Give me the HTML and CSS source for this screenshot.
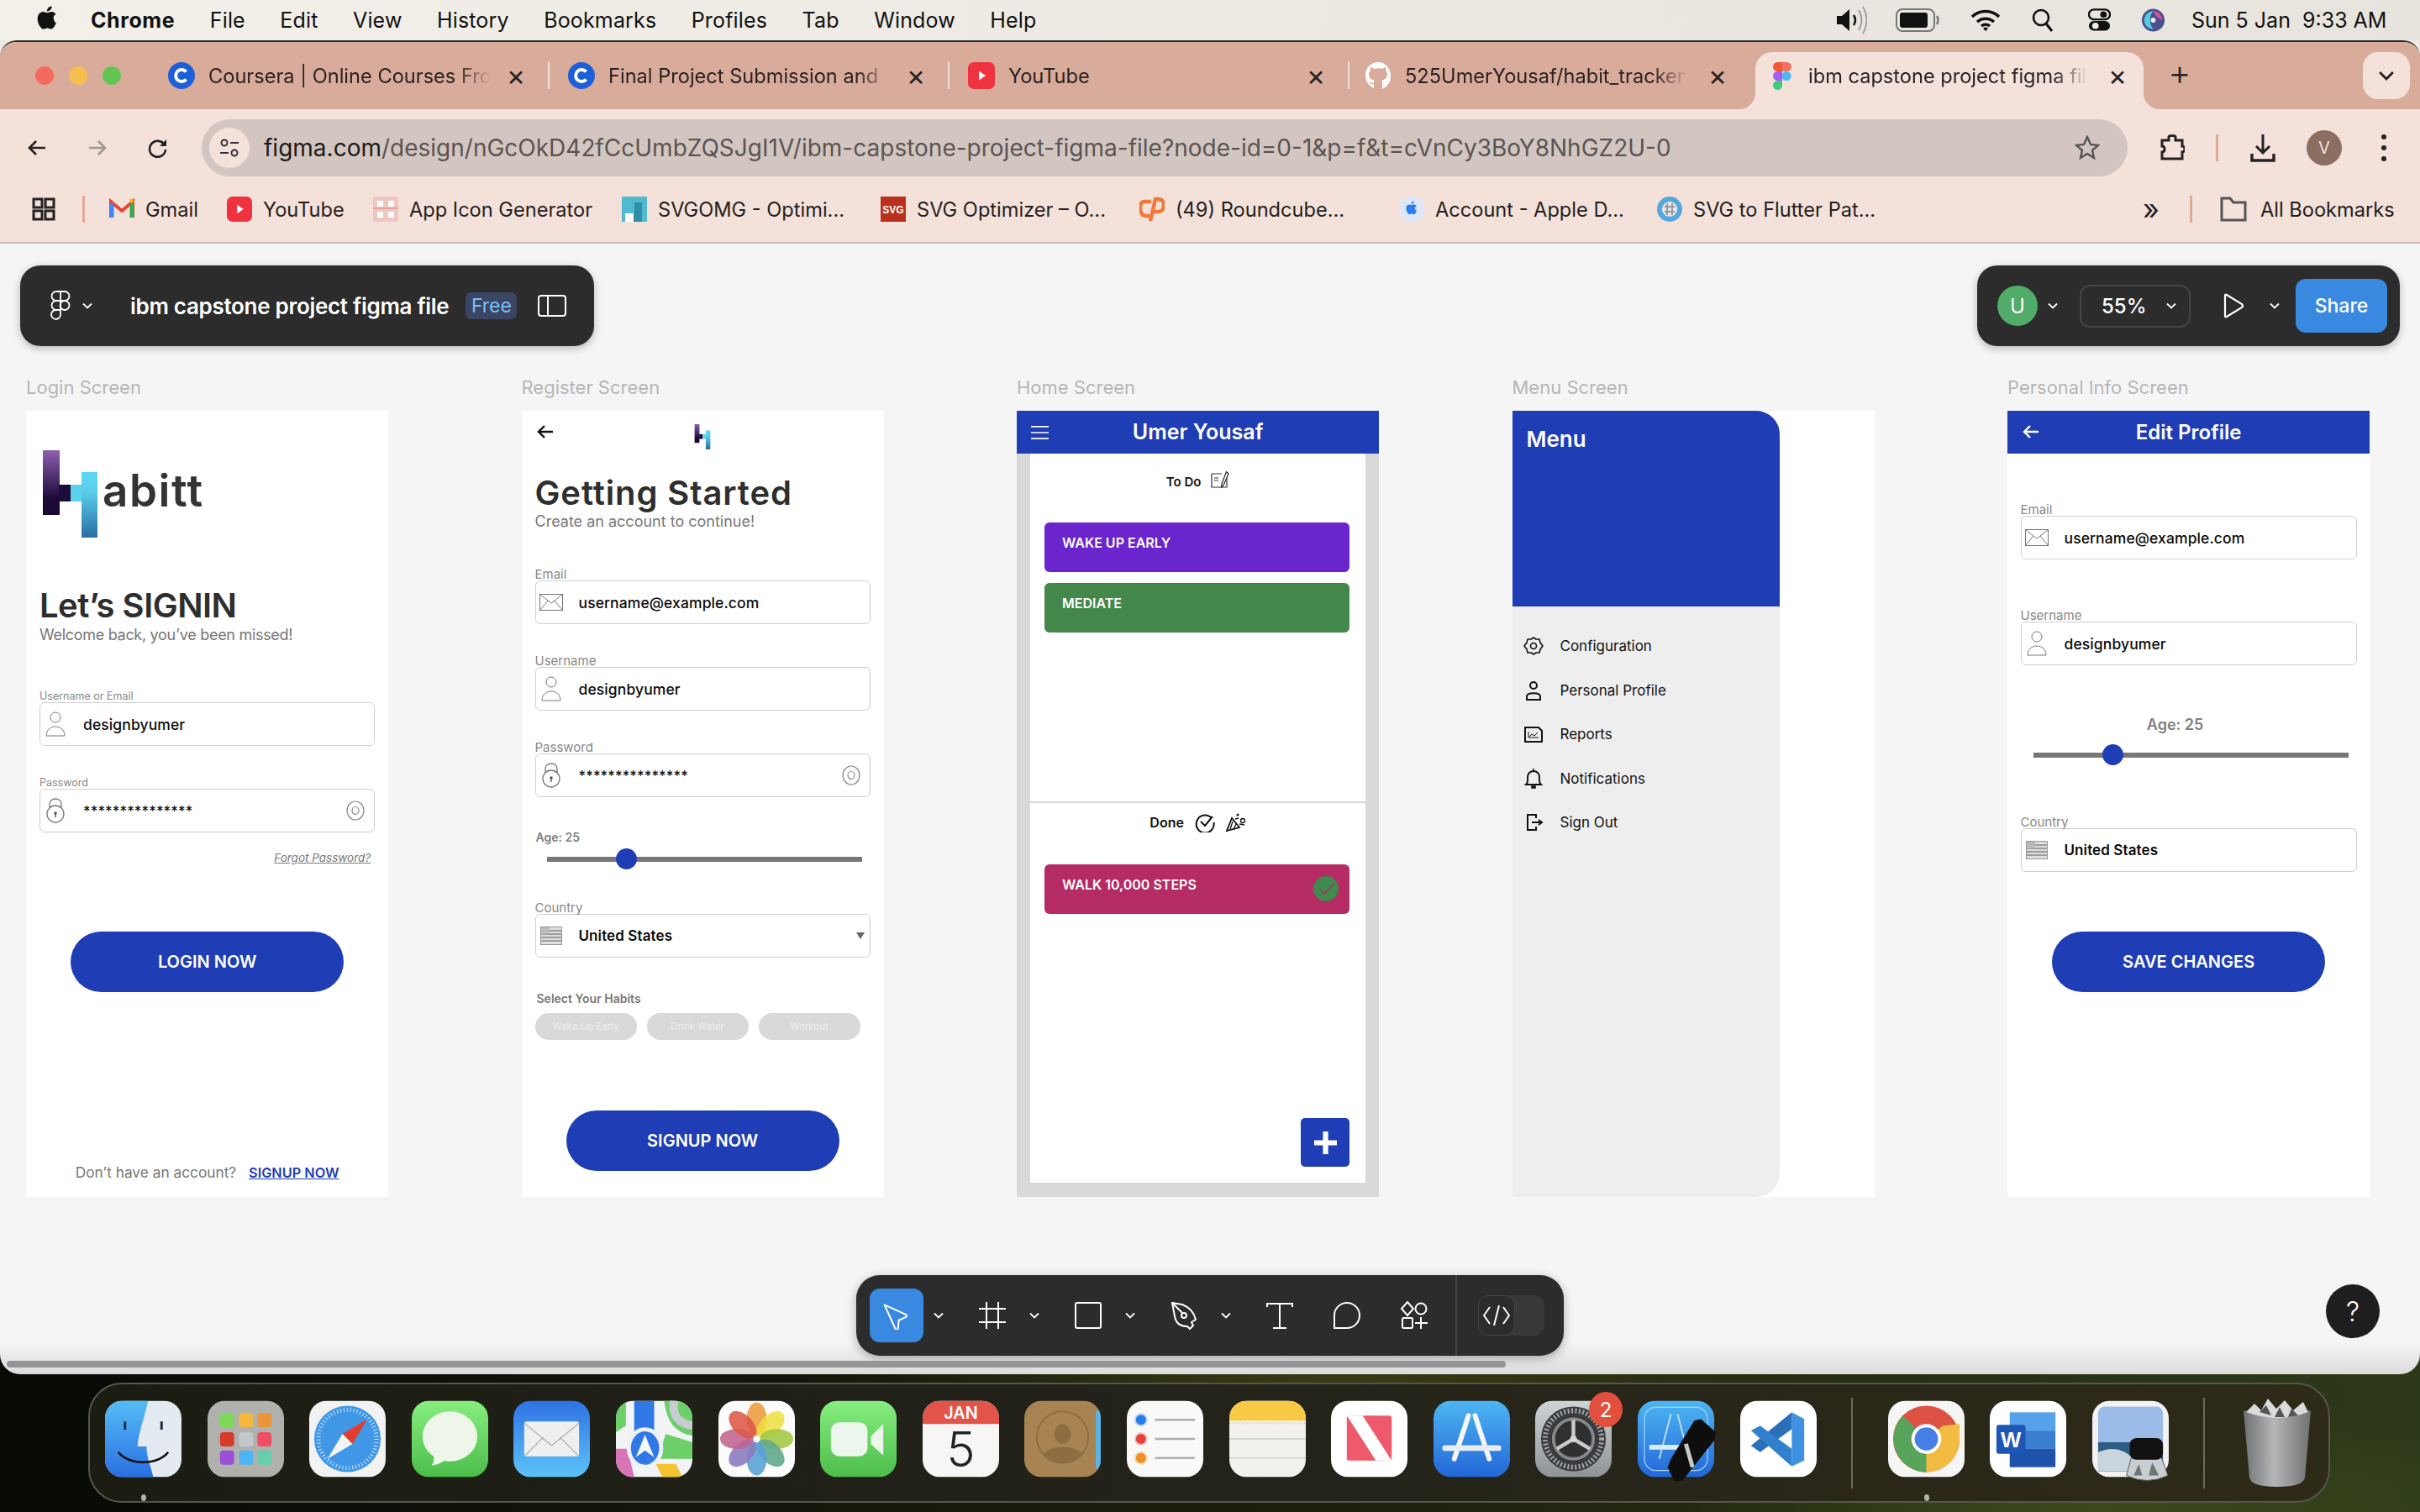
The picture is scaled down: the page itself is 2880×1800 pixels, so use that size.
FILE: index.html
```html
<!DOCTYPE html>
<html lang="en">
<head>
<meta charset="utf-8">
<title>ibm capstone project figma file</title>
<link rel="stylesheet" href="styles.css">
</head>
<body>
<svg class="defs" width="0" height="0" aria-hidden="true">
  <defs>
    <linearGradient id="g-purple" x1="0" y1="0" x2="0" y2="1"><stop offset="0" stop-color="#8d5fb0"/><stop offset=".75" stop-color="#1c0a38"/><stop offset="1" stop-color="#180833"/></linearGradient>
    <linearGradient id="g-teal" x1="0" y1="0" x2="0" y2="1"><stop offset="0" stop-color="#5ed8f2"/><stop offset=".3" stop-color="#59cfea"/><stop offset="1" stop-color="#2b6ca4"/></linearGradient>
    <linearGradient id="g-msg" x1="0" y1="0" x2="0" y2="1"><stop offset="0" stop-color="#87ee7f"/><stop offset="1" stop-color="#4cbd4a"/></linearGradient>
    <linearGradient id="g-mail" x1="0" y1="0" x2="0" y2="1"><stop offset="0" stop-color="#2f72e3"/><stop offset="1" stop-color="#5cc3f9"/></linearGradient>
    <linearGradient id="g-store" x1="0" y1="0" x2="0" y2="1"><stop offset="0" stop-color="#4db6f2"/><stop offset="1" stop-color="#2367d8"/></linearGradient>
    <linearGradient id="g-gear" x1="0" y1="0" x2="0" y2="1"><stop offset="0" stop-color="#cfd4d6"/><stop offset="1" stop-color="#8f9396"/></linearGradient>
    <linearGradient id="g-trash" x1="0" y1="0" x2="1" y2="0"><stop offset="0" stop-color="#6f7072"/><stop offset=".45" stop-color="#b5b6b8"/><stop offset="1" stop-color="#707173"/></linearGradient>
    <linearGradient id="g-finder" x1="0" y1="0" x2="0" y2="1"><stop offset="0" stop-color="#55bdf6"/><stop offset="1" stop-color="#2a6fe2"/></linearGradient>
    <clipPath id="sq"><rect width="92" height="92" rx="21"/></clipPath>

    <symbol id="logo-h" viewBox="0 0 65 104">
      <rect x="0" y="0" width="20" height="77" fill="url(#g-purple)"/>
      <rect x="19" y="41" width="14" height="20" fill="#1d0b3a"/>
      <rect x="33" y="41" width="14" height="20" fill="#5ad2ec"/>
      <rect x="46" y="26" width="19" height="78" fill="url(#g-teal)"/>
    </symbol>
    <symbol id="i-env" viewBox="0 0 28 20">
      <rect x=".5" y=".5" width="27" height="19" fill="none" stroke="#777"/>
      <path d="M.5 .5 14 11 27.500 .5M.5 19.500 10 8M27.500 19.500 18 8" fill="none" stroke="#777"/>
    </symbol>
    <symbol id="i-user" viewBox="0 0 24 30">
      <circle cx="12" cy="7" r="6" fill="none" stroke="#777"/>
      <path d="M1 29C1 22 6 18 12 18S23 22 23 29Z" fill="none" stroke="#777"/>
    </symbol>
    <symbol id="i-lock" viewBox="0 0 22 34">
      <path d="M4 14V9C4 1 18 1 18 9V14" fill="none" stroke="#777" stroke-width="1.300"/>
      <circle cx="11" cy="21" r="10" fill="none" stroke="#777" stroke-width="1.300"/>
      <circle cx="11" cy="20" r="1.800" fill="#555"/><rect x="10.300" y="20" width="1.400" height="5" fill="#555"/>
    </symbol>
    <symbol id="i-eye" viewBox="0 0 22 24">
      <ellipse cx="11" cy="12" rx="10" ry="11" fill="none" stroke="#888" stroke-width="1.200"/>
      <ellipse cx="11" cy="12" rx="4" ry="4.500" fill="none" stroke="#888" stroke-width="1.200"/>
    </symbol>
    <symbol id="i-flag" viewBox="0 0 26 22">
      <rect x=".5" y=".5" width="25" height="21" fill="#ddd" stroke="#999"/>
      <path d="M1 5H25M1 9H25M1 13H25M1 17H25" stroke="#888" stroke-width="1.500"/>
      <rect x="1" y="1" width="10" height="8" fill="#bbb"/>
    </symbol>
    <symbol id="i-back" viewBox="0 0 20 18">
      <path d="M19 9H3M9 2 2 9l7 7" fill="none" stroke="currentColor" stroke-width="2.400"/>
    </symbol>
    <symbol id="chev" viewBox="0 0 14 10">
      <path d="M2 2.500 7 7.500 12 2.500" fill="none" stroke="currentColor" stroke-width="1.800"/>
    </symbol>
    <symbol id="fav-c" viewBox="0 0 32 32">
      <circle cx="16" cy="16" r="16" fill="#1c5fd6"/>
      <path d="M21.500 11.500A7 7 0 1 0 21.500 20.500" fill="none" stroke="#fff" stroke-width="4"/>
    </symbol>
    <symbol id="fav-yt" viewBox="0 0 32 32">
      <rect width="32" height="32" rx="7" fill="#ee3240"/><path d="M13 10.500 21 16 13 21.500Z" fill="#fff"/>
    </symbol>
  </defs>
</svg>

<div class="menubar">
  <svg class="apple" viewBox="0 0 26 30"><path d="M21.500 16c0-3.500 2.800-5 3-5.200-1.700-2.400-4.200-2.800-5.100-2.800-2.100-.2-4.200 1.300-5.300 1.300S11.200 8 9.400 8C7.100 8.100 5 9.400 3.800 11.400c-2.400 4.200-.6 10.400 1.700 13.800C6.700 26.900 8 28.800 9.800 28.700c1.700-.1 2.400-1.100 4.400-1.100s2.700 1.100 4.500 1c1.900 0 3-1.700 4.200-3.400 1.300-1.900 1.900-3.800 1.900-3.900-.1 0-2.800-1.100-2.800-5.300ZM18.200 5.600C19.100 4.400 19.800 2.800 19.600 1.200 18.200 1.300 16.500 2.100 15.500 3.300c-.9 1-1.700 2.600-1.500 4.200 1.600.1 3.200-.8 4.200-1.900Z" fill="#111"/></svg>
  <nav class="menu-items">
    <span class="menu-app">Chrome</span><span>File</span><span>Edit</span><span>View</span><span>History</span><span>Bookmarks</span><span>Profiles</span><span>Tab</span><span>Window</span><span>Help</span>
  </nav>
  <div class="status">
    <svg class="st st-vol" viewBox="0 0 38 36"><path d="M2 13H8L17 5V31L8 23H2Z" fill="#111"/><path d="M22 12Q26 18 22 24" fill="none" stroke="#111" stroke-width="2.500"/><path d="M28 6Q35 18 28 30M33 2Q42 18 33 34" fill="none" stroke="#999" stroke-width="1.800"/></svg>
    <svg class="st st-bat" viewBox="0 0 52 30"><rect x="1" y="2" width="45" height="26" rx="7" fill="none" stroke="#777" stroke-width="2"/><rect x="5" y="6" width="33" height="18" rx="3" fill="#111"/><path d="M49 10Q52 15 49 20" fill="none" stroke="#777" stroke-width="2.500"/></svg>
    <svg class="st st-wifi" viewBox="0 0 36 28"><path d="M2 10A23 23 0 0 1 34 10M8 16A15 15 0 0 1 28 16M13 21A8 8 0 0 1 23 21" fill="none" stroke="#111" stroke-width="3.500"/><path d="M15 24 18 27 21 24 18 22Z" fill="#111"/></svg>
    <svg class="st st-search" viewBox="0 0 26 30"><circle cx="11" cy="12" r="9" fill="none" stroke="#111" stroke-width="2.600"/><path d="M17 19 24 28" stroke="#111" stroke-width="3"/></svg>
    <svg class="st st-ctl" viewBox="0 0 28 28"><rect x="1" y="1" width="26" height="12" rx="6" fill="none" stroke="#111" stroke-width="2.400"/><circle cx="19" cy="7" r="4" fill="#111"/><rect x="1" y="15" width="26" height="12" rx="6" fill="#111"/><circle cx="9" cy="21" r="4" fill="#ececec"/></svg>
    <svg class="st st-siri" viewBox="0 0 30 30"><circle cx="15" cy="15" r="14" fill="#4b4f8f"/><path d="M4 15A11 11 0 0 1 15 4C10 9 10 20 15 26A11 11 0 0 1 4 15Z" fill="#4ccfe0"/><path d="M15 4A11 11 0 0 1 26 15C20 12 17 9 15 4Z" fill="#d94f9c"/><circle cx="15" cy="15" r="3" fill="#eef"/></svg>
    <span class="clock">Sun 5 Jan&nbsp;&nbsp;9:33 AM</span>
  </div>
</div>

<div class="window">
  <div class="tabstrip">
    <div class="lights"><i class="light l-r"></i><i class="light l-y"></i><i class="light l-g"></i></div>
    <div class="tab"><svg class="fav"><use href="#fav-c"/></svg><span class="tab-t">Coursera | Online Courses Fro</span><span class="tab-x">×</span></div>
    <div class="tab"><svg class="fav"><use href="#fav-c"/></svg><span class="tab-t">Final Project Submission and</span><span class="tab-x">×</span></div>
    <div class="tab"><svg class="fav"><use href="#fav-yt"/></svg><span class="tab-t tab-t-plain">YouTube</span><span class="tab-x">×</span></div>
    <div class="tab tab-gh"><svg class="fav" viewBox="0 0 32 32"><path d="M16 0C7 0 1 7 1 16c0 7 4 12 10 15v-5c-4 1-5-1-6-3 2 1 3 2 6 2 0-2 0-3 1-3-4-1-7-3-7-8 0-2 1-3 2-4-1-2 0-4 0-4s2 0 4 2c3-1 7-1 10 0 2-2 4-2 4-2s1 2 0 4c1 1 2 2 2 4 0 5-3 7-7 8 1 1 1 2 1 4v6c6-3 10-8 10-15C31 7 25 0 16 0Z" fill="#fff"/></svg><span class="tab-t">525UmerYousaf/habit_tracker</span><span class="tab-x">×</span></div>
    <div class="tab tab-on"><svg class="fav fav-fig" viewBox="0 0 22 33"><circle cx="16" cy="16.500" r="5.500" fill="#4db8f5"/><path d="M5.500 0H11V11H5.500A5.500 5.500 0 0 1 5.500 0Z" fill="#f2583a"/><path d="M11 0H16.500A5.500 5.500 0 0 1 16.500 11H11Z" fill="#f27262"/><path d="M5.500 11H11V22H5.500A5.500 5.500 0 0 1 5.500 11Z" fill="#a45df0"/><path d="M5.500 22H11V27.500A5.500 5.500 0 1 1 5.500 22Z" fill="#3ecb7f"/></svg><span class="tab-t">ibm capstone project figma fil</span><span class="tab-x">×</span></div>
    <span class="tab-plus">+</span>
    <span class="tab-more"><svg class="chev-more"><use href="#chev"/></svg></span>
  </div>

  <div class="toolbar">
    <svg class="nav-i" viewBox="0 0 24 24"><path d="M22 12H4M11 4 3 12l8 8" fill="none" stroke="#222" stroke-width="2.600"/></svg>
    <svg class="nav-i" viewBox="0 0 24 24"><path d="M2 12H20M13 4l8 8-8 8" fill="none" stroke="#a09793" stroke-width="2.600"/></svg>
    <svg class="nav-i" viewBox="0 0 24 24"><path d="M20 9A9.500 9.500 0 1 0 21 14" fill="none" stroke="#222" stroke-width="2.600"/><path d="M22 2V10H14Z" fill="#222"/></svg>
    <div class="omnibox">
      <span class="site-btn"><svg viewBox="0 0 26 26"><circle cx="7" cy="7" r="3.500" fill="none" stroke="#333" stroke-width="2"/><path d="M14 7H24M2 19H12" stroke="#333" stroke-width="2"/><circle cx="19" cy="19" r="3.500" fill="none" stroke="#333" stroke-width="2"/></svg></span>
      <span class="url"><b>figma.com</b>/design/nGcOkD42fCcUmbZQSJgI1V/ibm-capstone-project-figma-file?node-id=0-1&amp;p=f&amp;t=cVnCy3BoY8NhGZ2U-0</span>
      <svg class="star" viewBox="0 0 30 30"><path d="M15 2 19 11 28 12 21 18 23 27 15 22 7 27 9 18 2 12 11 11Z" fill="none" stroke="#555" stroke-width="2.400"/></svg>
    </div>
    <svg class="tb-ext" viewBox="0 0 30 32"><path d="M3 7H11V3C11 1 19 1 19 3V7H27V14C29 14 30 16 30 17.500 30 19 29 21 27 21V29H3V21C7 21 7 14 3 14Z" fill="none" stroke="#222" stroke-width="3"/></svg>
    <i class="tb-sep"></i>
    <svg class="tb-dl" viewBox="0 0 30 34"><path d="M15 1V22M7 15 15 23 23 15" fill="none" stroke="#222" stroke-width="3"/><path d="M2 24V32H28V24" fill="none" stroke="#222" stroke-width="3.400"/></svg>
    <span class="tb-avatar">V</span>
    <span class="tb-dots"><i></i><i></i><i></i></span>
  </div>

  <div class="bookmarks">
    <div class="bm-start"><svg class="bm-apps" viewBox="0 0 28 28"><path d="M2 2H12V12H2ZM16 2H26V12H16ZM2 16H12V26H2ZM16 16H26V26H16Z" fill="none" stroke="#222" stroke-width="3"/></svg><i class="bm-sep"></i></div>
    <div class="bm-list">
      <span class="bm"><svg class="bmi" viewBox="0 0 30 30"><path d="M2 25V6L15 17 28 6V25" fill="none" stroke="#ea4335" stroke-width="4"/><path d="M3 25V8" stroke="#4285f4" stroke-width="5"/><path d="M27 25V8" stroke="#34a853" stroke-width="5"/><path d="M25 6 28 4" stroke="#fbbc04" stroke-width="5"/></svg>Gmail</span>
      <span class="bm"><svg class="bmi"><use href="#fav-yt"/></svg>YouTube</span>
      <span class="bm"><svg class="bmi" viewBox="0 0 30 30"><path d="M0 0H30V30H0Z" fill="#eec7c0"/><path d="M5 5H12V12H5ZM18 5H25V12H18ZM5 18H12V25H5ZM18 18H25V25H18Z" fill="#fff"/><path d="M0 14H30" stroke="#e5a59c" stroke-width="2"/></svg>App Icon Generator</span>
      <span class="bm"><svg class="bmi" viewBox="0 0 30 30"><rect width="30" height="30" fill="#52b9d2"/><path d="M15 7H24V30H4V20H15Z" fill="#2f8ea6"/><rect x="4" y="20" width="10" height="10" fill="#fff"/></svg>SVGOMG - Optimi...</span>
      <span class="bm"><svg class="bmi" viewBox="0 0 30 30"><rect width="30" height="30" fill="#b9301d"/><text x="15" y="20" text-anchor="middle" class="svg-mini">SVG</text></svg>SVG Optimizer – O...</span>
      <span class="bm"><svg class="bmi" viewBox="0 0 30 30"><path d="M14 6H6C2 6 1 10 1 14S3 23 8 23H12" fill="none" stroke="#f0793a" stroke-width="4.500"/><path d="M13 29 19 3H23C28 3 29 8 29 11S27 18 22 18H17" fill="none" stroke="#f0793a" stroke-width="4.500"/></svg>(49) Roundcube...</span>
      <span class="bm bm-apple"><svg class="bmi" viewBox="0 0 30 30"><circle cx="15" cy="15" r="15" fill="#dbe8fb"/><path d="M19 14c0-2 1.500-3 1.700-3-1-1.400-2.400-1.600-2.900-1.600-1.200-.1-2.400.7-3 .7S13.200 9.400 12.200 9.400C10.800 9.400 9.600 10.200 9 11.300 7.600 13.700 8.600 17.200 10 19.200c.7 1 1.400 2.100 2.500 2 1-.1 1.300-.6 2.500-.6s1.500.6 2.500.6c1.100 0 1.700-1 2.400-2 .7-1.100 1-2.100 1-2.200-.1 0-1.900-.7-1.900-3ZM17 7.800C17.500 7.100 17.900 6.200 17.800 5.300 17 5.400 16 5.800 15.500 6.500 15 7.100 14.500 8 14.600 8.900 15.500 9 16.400 8.500 17 7.800Z" fill="#2b7cf0"/></svg>Account - Apple D...</span>
      <span class="bm"><svg class="bmi" viewBox="0 0 30 30"><circle cx="15" cy="15" r="15" fill="#55a8de"/><circle cx="15" cy="15" r="9" fill="#e8e8e8"/><path d="M9 12H21M9 18H21M12 8V22M18 8V22" stroke="#999" stroke-width="2"/></svg>SVG to Flutter Pat...</span>
    </div>
    <div class="bm-end">
      <span class="bm-more">»</span><i class="bm-sep"></i>
      <svg class="bm-folder" viewBox="0 0 32 30"><path d="M2 28V2H12L16 7H30V28Z" fill="none" stroke="#555" stroke-width="3"/></svg>
      <span class="bm-all">All Bookmarks</span>
    </div>
  </div>

  <main class="canvas">
    <div class="screens">

      <section class="artboard">
        <h2 class="board-name">Login Screen</h2>
        <div class="frame login">
          <div class="brand"><svg class="brand-h"><use href="#logo-h"/></svg><span class="brand-t">abitt</span></div>
          <h1 class="headline login-title">Let’s SIGNIN</h1>
          <p class="subline login-sub">Welcome back, you’ve been missed!</p>
          <div class="field login-f1"><div class="f-label f-label-sm">Username or Email</div><div class="input"><span class="slot"><svg class="ic-user"><use href="#i-user"/></svg></span><span class="val">designbyumer</span></div></div>
          <div class="field login-f2"><div class="f-label f-label-sm">Password</div><div class="input"><span class="slot"><svg class="ic-lock"><use href="#i-lock"/></svg></span><span class="val val-pw">***************</span><svg class="ic-eye"><use href="#i-eye"/></svg></div></div>
          <a class="forgot">Forgot Password?</a>
          <div class="cta login-cta">LOGIN NOW</div>
          <p class="foot">Don’t have an account? <a class="foot-link">SIGNUP NOW</a></p>
        </div>
      </section>

      <section class="artboard">
        <h2 class="board-name">Register Screen</h2>
        <div class="frame register">
          <div class="reg-top"><svg class="reg-back"><use href="#i-back"/></svg><svg class="reg-logo"><use href="#logo-h"/></svg></div>
          <h1 class="headline reg-title">Getting Started</h1>
          <p class="subline reg-sub">Create an account to continue!</p>
          <div class="field reg-f1"><div class="f-label">Email</div><div class="input"><span class="slot"><svg class="ic-env"><use href="#i-env"/></svg></span><span class="val">username@example.com</span></div></div>
          <div class="field reg-f"><div class="f-label">Username</div><div class="input"><span class="slot"><svg class="ic-user"><use href="#i-user"/></svg></span><span class="val">designbyumer</span></div></div>
          <div class="field reg-f"><div class="f-label">Password</div><div class="input"><span class="slot"><svg class="ic-lock"><use href="#i-lock"/></svg></span><span class="val val-pw">***************</span><svg class="ic-eye"><use href="#i-eye"/></svg></div></div>
          <div class="age reg-age">Age: 25</div>
          <div class="slider reg-slider"><i class="thumb"></i></div>
          <div class="field reg-f reg-country"><div class="f-label">Country</div><div class="input"><span class="slot"><svg class="ic-flag"><use href="#i-flag"/></svg></span><span class="val val-strong">United States</span><i class="caret"></i></div></div>
          <div class="habits-title">Select Your Habits</div>
          <div class="chips"><span class="chip">Wake Up Early</span><span class="chip">Drink Water</span><span class="chip">Workout</span></div>
          <div class="cta reg-cta">SIGNUP NOW</div>
        </div>
      </section>

      <section class="artboard">
        <h2 class="board-name">Home Screen</h2>
        <div class="frame home">
          <header class="bar">
            <svg class="burger" viewBox="0 0 22 18"><path d="M0 1.500H22M0 9H22M0 16.500H22" stroke="#fff" stroke-width="1.800"/></svg>
            <span class="bar-title">Umer Yousaf</span>
          </header>
          <div class="home-body">
            <div class="home-todo">
              <div class="sec-head">To Do<svg class="ic-note" viewBox="0 0 22 22"><path d="M13 4H1V20H19V9" fill="none" stroke="#333" stroke-width="1.200"/><path d="M4 9H9M4 12H9" stroke="#333" stroke-width="1.200"/><path d="M13 16 12.500 20 15 18 21 4 18.500 1.500Z" fill="#fff" stroke="#222" stroke-width="1.200"/></svg></div>
              <div class="habit h-purple">WAKE UP EARLY</div>
              <div class="habit h-green">MEDIATE</div>
            </div>
            <div class="home-done">
              <div class="sec-head sec-done">Done<svg class="ic-check" viewBox="0 0 24 24"><path d="M20 7A10.500 10.500 0 1 0 22.500 12" fill="none" stroke="#111" stroke-width="2"/><path d="M7 11 12 16 21 5" fill="none" stroke="#111" stroke-width="2"/></svg><svg class="ic-party" viewBox="0 0 24 24"><path d="M1 22 7 7 16 18Z" fill="none" stroke="#111" stroke-width="1.800"/><path d="M5 20 8 11M9 20 12 14" stroke="#111" stroke-width="1.300"/><circle cx="14" cy="3" r="1.500" fill="#111"/><circle cx="20" cy="10" r="2.500" fill="none" stroke="#111" stroke-width="1.300"/><path d="M11 8 15 7M16 14 22 15" stroke="#111" stroke-width="1.500"/></svg></div>
              <div class="habit h-pink">WALK 10,000 STEPS<svg class="done-mark" viewBox="0 0 30 30"><circle cx="15" cy="15" r="15" fill="#3f8a4d"/><path d="M7 15 13 21 25 8" fill="none" stroke="#b52b63" stroke-width="1.400"/></svg></div>
              <div class="fab"><svg viewBox="0 0 26 26"><path d="M13 0V26M0 13H26" stroke="#fff" stroke-width="6"/></svg></div>
            </div>
          </div>
        </div>
      </section>

      <section class="artboard">
        <h2 class="board-name">Menu Screen</h2>
        <div class="frame menu">
          <aside class="drawer">
            <div class="drawer-head">Menu</div>
            <ul class="drawer-list">
              <li><svg class="d-ic" viewBox="0 0 24 24"><path d="M12 2 15 4 19 4 20 8 23 12 20 16 19 20 15 20 12 22 9 20 5 20 4 16 1 12 4 8 5 4 9 4Z" fill="none" stroke="#111" stroke-width="1.600" stroke-linejoin="round"/><circle cx="12" cy="12" r="3.500" fill="none" stroke="#111" stroke-width="1.600"/></svg>Configuration</li>
              <li><svg class="d-ic" viewBox="0 0 24 24"><circle cx="12" cy="6" r="4" fill="none" stroke="#111" stroke-width="2"/><path d="M4 23V19C4 14 20 14 20 19V23Z" fill="none" stroke="#111" stroke-width="2"/></svg>Personal Profile</li>
              <li><svg class="d-ic" viewBox="0 0 24 24"><path d="M2 4H18L22 8V21H2Z" fill="none" stroke="#111" stroke-width="2"/><path d="M6 9V16H18M7 15 10 12 13 14 17 10" fill="none" stroke="#111" stroke-width="1"/></svg>Reports</li>
              <li><svg class="d-ic" viewBox="0 0 24 24"><path d="M3 19H21C18 16 19 14 19 10S16 3 12 3 5 6 5 10 6 16 3 19Z" fill="none" stroke="#111" stroke-width="1.900"/><path d="M12 0V3M10 21H14V23H10Z" stroke="#111" stroke-width="1.600" fill="#111"/></svg>Notifications</li>
              <li><svg class="d-ic" viewBox="0 0 24 24"><path d="M15 7V3H5V21H15V17" fill="none" stroke="#111" stroke-width="2"/><path d="M10 12H21M18 9 22 12 18 15" fill="none" stroke="#111" stroke-width="2"/></svg>Sign Out</li>
            </ul>
          </aside>
        </div>
      </section>

      <section class="artboard">
        <h2 class="board-name">Personal Info Screen</h2>
        <div class="frame profile">
          <header class="bar">
            <svg class="bar-back"><use href="#i-back"/></svg>
            <span class="bar-title bar-title-sm">Edit Profile</span>
          </header>
          <div class="profile-body">
            <div class="field pf-f1"><div class="f-label">Email</div><div class="input"><span class="slot"><svg class="ic-env"><use href="#i-env"/></svg></span><span class="val">username@example.com</span></div></div>
            <div class="field pf-f"><div class="f-label">Username</div><div class="input"><span class="slot"><svg class="ic-user"><use href="#i-user"/></svg></span><span class="val">designbyumer</span></div></div>
            <div class="age pf-age">Age: 25</div>
            <div class="slider pf-slider"><i class="thumb"></i></div>
            <div class="field pf-f"><div class="f-label">Country</div><div class="input"><span class="slot"><svg class="ic-flag"><use href="#i-flag"/></svg></span><span class="val val-strong">United States</span></div></div>
            <div class="cta pf-cta">SAVE CHANGES</div>
          </div>
        </div>
      </section>
    </div>

    <div class="float-left">
      <svg class="fig-mark" viewBox="0 0 24 36"><path d="M7 1H12V12H7A5.500 5.500 0 0 1 7 1ZM12 1H17A5.500 5.500 0 0 1 17 12H12ZM7 12H12V23H7A5.500 5.500 0 0 1 7 12ZM7 23H12V29A5.500 5.500 0 1 1 7 23Z" fill="none" stroke="#fff" stroke-width="1.800"/><circle cx="17" cy="17.500" r="5.500" fill="none" stroke="#fff" stroke-width="1.800"/></svg>
      <svg class="fl-chev"><use href="#chev"/></svg>
      <span class="file-name">ibm capstone project figma file</span>
      <span class="free">Free</span>
      <svg class="side-i" viewBox="0 0 34 26"><rect x="1" y="1" width="32" height="24" rx="3" fill="none" stroke="#fff" stroke-width="2"/><path d="M12 1V25" stroke="#fff" stroke-width="2"/></svg>
    </div>

    <div class="float-right">
      <span class="fr-avatar">U</span>
      <svg class="fl-chev fr-c1"><use href="#chev"/></svg>
      <span class="zoombox">55%<svg class="fl-chev zb-c"><use href="#chev"/></svg></span>
      <svg class="play" viewBox="0 0 26 30"><path d="M3 3Q3 1 5 2L23 13Q25 15 23 17L5 28Q3 29 3 27Z" fill="none" stroke="#fff" stroke-width="2.200"/></svg>
      <svg class="fl-chev fr-c2"><use href="#chev"/></svg>
      <span class="share">Share</span>
    </div>

    <div class="tools">
      <span class="t-active"><svg class="t-ic" viewBox="0 0 34 34"><path d="M4 3 28 17Q30 19 28 20L19 23 17 33Q15 35 14 33Z" fill="none" stroke="#fff" stroke-width="2" stroke-linejoin="round" transform="rotate(-6 17 17)"/></svg></span>
      <svg class="t-chev"><use href="#chev"/></svg>
      <span class="t-slot"><svg class="t-ic" viewBox="0 0 34 34"><path d="M10 1V33M24 1V33M1 9H33M1 25H33" fill="none" stroke="#fff" stroke-width="2"/></svg></span>
      <svg class="t-chev"><use href="#chev"/></svg>
      <span class="t-slot"><svg class="t-ic" viewBox="0 0 34 34"><rect x="2" y="2" width="30" height="30" rx="2" fill="none" stroke="#fff" stroke-width="2"/></svg></span>
      <svg class="t-chev"><use href="#chev"/></svg>
      <span class="t-slot"><svg class="t-ic" viewBox="0 0 34 34"><path d="M3 2 15 4Q28 9 31 22L26 25 28 29 24 33 21 30Q8 30 6 18Z" fill="none" stroke="#fff" stroke-width="2" stroke-linejoin="round"/><path d="M3 2 15 14" stroke="#fff" stroke-width="2"/><circle cx="17" cy="17" r="3" fill="none" stroke="#fff" stroke-width="2"/></svg></span>
      <svg class="t-chev"><use href="#chev"/></svg>
      <span class="t-slot"><svg class="t-ic" viewBox="0 0 34 34"><path d="M2 7V3H32V7M17 3V32M9 32H25" fill="none" stroke="#fff" stroke-width="2"/></svg></span>
      <span class="t-slot t-next"><svg class="t-ic" viewBox="0 0 34 34"><path d="M2 32V17A15 15 0 1 1 17 32Z" fill="none" stroke="#fff" stroke-width="2"/></svg></span>
      <span class="t-slot t-next"><svg class="t-ic" viewBox="0 0 34 34"><path d="M9 1 16 9 9 17 2 9Z" fill="none" stroke="#fff" stroke-width="2"/><circle cx="25" cy="9" r="6.500" fill="none" stroke="#fff" stroke-width="2"/><rect x="3" y="20" width="12" height="12" rx="1.500" fill="none" stroke="#fff" stroke-width="2"/><path d="M25 19V33M18 26H33" stroke="#fff" stroke-width="2"/></svg></span>
      <i class="t-div"></i>
      <span class="code-toggle"><span class="code-knob"><svg class="code-ic" viewBox="0 0 32 26"><path d="M8 3 1 13 8 23M24 3 31 13 24 23M19 1 13 25" fill="none" stroke="#fff" stroke-width="2"/></svg></span></span>
    </div>

    <div class="help">?</div>
    <div class="scroll-thumb"></div>
  </main>
</div>

<div class="dock-zone">
  <div class="dock">
    <div class="app run"><svg viewBox="0 0 92 92"><g clip-path="url(#sq)"><rect width="92" height="92" fill="#e3eaf1"/><path d="M0 0H52C46 25 40 40 39 55H50C50 70 56 80 58 92H0Z" fill="url(#g-finder)"/><path d="M24 25V35M68 25V35" stroke="#1a2a3a" stroke-width="3"/><path d="M16 62C30 78 62 78 76 62" fill="none" stroke="#111" stroke-width="2.500"/></g></svg></div>
    <div class="app"><svg viewBox="0 0 92 92"><g clip-path="url(#sq)"><rect width="92" height="92" fill="#b0b1ad"/><rect x="15" y="15" width="17" height="17" rx="4" fill="#7ed957"/><rect x="38" y="15" width="17" height="17" rx="4" fill="#f5b83d"/><rect x="60" y="15" width="17" height="17" rx="4" fill="#e9963a"/><rect x="15" y="38" width="17" height="17" rx="4" fill="#d63b2b"/><rect x="38" y="38" width="17" height="17" rx="4" fill="#c2c7c9"/><rect x="60" y="38" width="17" height="17" rx="4" fill="#ee4f63"/><rect x="15" y="60" width="17" height="17" rx="4" fill="#9a4fd6"/><rect x="38" y="60" width="17" height="17" rx="4" fill="#4db5f5"/><rect x="60" y="60" width="17" height="17" rx="4" fill="#66cfae"/></g></svg></div>
    <div class="app"><svg viewBox="0 0 92 92"><g clip-path="url(#sq)"><rect width="92" height="92" fill="#f2f2f2"/><circle cx="46" cy="46" r="40" fill="#3f97e6"/><circle cx="46" cy="46" r="35" fill="none" stroke="#cfe6fa" stroke-width="5" stroke-dasharray="1 3"/><path d="M70 22 52 52 40 40Z" fill="#e23d2d"/><path d="M22 70 52 52 40 40Z" fill="#f4f4f4"/></g></svg></div>
    <div class="app"><svg viewBox="0 0 92 92"><g clip-path="url(#sq)"><rect width="92" height="92" fill="url(#g-msg)"/><ellipse cx="46" cy="43" rx="33" ry="30" fill="#eef6ea"/><path d="M26 62Q28 74 24 78 36 76 42 70Z" fill="#eef6ea"/></g></svg></div>
    <div class="app"><svg viewBox="0 0 92 92"><g clip-path="url(#sq)"><rect width="92" height="92" fill="url(#g-mail)"/><rect x="13" y="25" width="66" height="42" rx="3" fill="#efefef"/><path d="M13 27 46 54 79 27M14 66 36 44M78 66 56 44" fill="none" stroke="#b5b5b5" stroke-width="1.500"/></g></svg></div>
    <div class="app"><svg viewBox="0 0 92 92"><g clip-path="url(#sq)"><rect width="92" height="92" fill="#f1f3f5"/><path d="M58 0H92V42Q62 38 58 0Z" fill="#6ccf6a"/><path d="M70 0Q66 26 92 30" fill="none" stroke="#c9cbd2" stroke-width="10"/><path d="M0 0H12V30L0 38Z" fill="#6ccf6a"/><path d="M0 58H14L22 92H0Z" fill="#d874b8"/><path d="M50 70H92V50L60 40Z" fill="#6ccf6a"/><path d="M48 76H72L80 92H56Z" fill="#f4c431"/><rect x="22" y="0" width="24" height="40" fill="#2f78e6"/><ellipse cx="35" cy="57" rx="22" ry="25" fill="#eef0f4"/><ellipse cx="35" cy="57" rx="17" ry="20" fill="#2f78e6"/><path d="M35 41 46 68 35 60 24 68Z" fill="#f4f6fa"/></g></svg></div>
    <div class="app"><svg viewBox="0 0 92 92"><g clip-path="url(#sq)"><rect width="92" height="92" fill="#fbfbfb"/><g transform="translate(46 46)"><ellipse cy="-24" rx="12" ry="20" fill="#ec9b3c" opacity=".88"/><ellipse cy="-24" rx="12" ry="20" fill="#efdf40" opacity=".85" transform="rotate(45)"/><ellipse cy="-24" rx="12" ry="20" fill="#a2c740" opacity=".88" transform="rotate(90)"/><ellipse cy="-24" rx="12" ry="20" fill="#62a98c" opacity=".9" transform="rotate(135)"/><ellipse cy="-24" rx="12" ry="20" fill="#5ba2d8" opacity=".9" transform="rotate(180)"/><ellipse cy="-24" rx="12" ry="20" fill="#8b7cc0" opacity=".9" transform="rotate(225)"/><ellipse cy="-24" rx="12" ry="20" fill="#c2648f" opacity=".88" transform="rotate(270)"/><ellipse cy="-24" rx="12" ry="20" fill="#dd5947" opacity=".88" transform="rotate(315)"/></g></g></svg></div>
    <div class="app"><svg viewBox="0 0 92 92"><g clip-path="url(#sq)"><rect width="92" height="92" fill="url(#g-msg)"/><rect x="13" y="26" width="44" height="41" rx="10" fill="#edf6ec"/><path d="M61 43 76 28V66L61 52Z" fill="#edf6ec"/></g></svg></div>
    <div class="app"><svg viewBox="0 0 92 92"><g clip-path="url(#sq)"><rect width="92" height="92" fill="#f7f6f4"/><rect width="92" height="28" fill="#e2544a"/><text x="46" y="22" text-anchor="middle" class="cal-m">JAN</text><text x="46" y="79" text-anchor="middle" class="cal-d">5</text></g></svg></div>
    <div class="app"><svg viewBox="0 0 92 92"><g clip-path="url(#sq)"><rect width="92" height="92" fill="#a78452"/><rect x="86" y="12" width="6" height="70" fill="#5bb4e6"/><circle cx="46" cy="44" r="31" fill="none" stroke="#8d6d42" stroke-width="2"/><ellipse cx="46" cy="40" rx="10" ry="12" fill="#8d6d42"/><path d="M22 66C28 52 64 52 70 66Q46 84 22 66Z" fill="#8d6d42"/></g></svg></div>
    <div class="app"><svg viewBox="0 0 92 92"><g clip-path="url(#sq)"><rect width="92" height="92" fill="#f9f9f7"/><circle cx="17" cy="23" r="7" fill="#2a7de9" stroke="#bcd6f5" stroke-width="2"/><circle cx="17" cy="46" r="7" fill="#e2423a" stroke="#f3c3c0" stroke-width="2"/><circle cx="17" cy="69" r="7" fill="#ee8f26" stroke="#f6d7b2" stroke-width="2"/><path d="M34 23H82M34 46H82M34 69H82" stroke="#aeaeae" stroke-width="2.500"/></g></svg></div>
    <div class="app"><svg viewBox="0 0 92 92"><g clip-path="url(#sq)"><rect width="92" height="92" fill="#f3f1ec"/><rect width="92" height="24" fill="#f8c945"/><path d="M0 46H92M0 69H92" stroke="#cfcdc8" stroke-width="1.500"/><path d="M0 27H92" stroke="#c9c7c2" stroke-width="2" stroke-dasharray="1 2"/></g></svg></div>
    <div class="app"><svg viewBox="0 0 92 92"><g clip-path="url(#sq)"><rect width="92" height="92" fill="#fff"/><rect x="19" y="18" width="54" height="54" rx="3" fill="#ee5a6b"/><path d="M19 18H38L73 72H54Z" fill="#fff"/></g></svg></div>
    <div class="app"><svg viewBox="0 0 92 92"><g clip-path="url(#sq)"><rect width="92" height="92" fill="url(#g-store)"/><path d="M42 18 25 70M50 18 67 70" stroke="#f3f6fa" stroke-width="6" stroke-linecap="round"/><path d="M14 57H78" stroke="#e8edf3" stroke-width="7" stroke-linecap="round"/></g></svg></div>
    <div class="app"><svg viewBox="0 0 92 92"><g clip-path="url(#sq)"><rect width="92" height="92" fill="url(#g-gear)"/><circle cx="46" cy="46" r="39" fill="#3a3c3e"/><circle cx="46" cy="46" r="34" fill="none" stroke="#a2a4a6" stroke-width="6" stroke-dasharray="2 2.500"/><circle cx="46" cy="46" r="27" fill="#2e3032"/><circle cx="46" cy="46" r="24" fill="none" stroke="#85878a" stroke-width="4"/><path d="M46 46V23M46 46 26 58M46 46 66 58" stroke="#c9cacc" stroke-width="4.500"/><circle cx="46" cy="46" r="4" fill="#d5d6d8"/></g></svg></div>
    <div class="app"><svg viewBox="0 0 92 92"><g clip-path="url(#sq)"><rect width="92" height="92" fill="url(#g-store)"/><rect x="8" y="8" width="76" height="76" rx="14" fill="none" stroke="#a9d4f7" stroke-width="1.200"/><path d="M40 16 26 70M48 16 62 70" stroke="#c5e3fb" stroke-width="1.800" fill="none"/><path d="M14 56H78" stroke="#d9ecfb" stroke-width="6"/></g><path d="M68 24 76 22 94 38 92 48 54 96 44 97 36 80 40 70Z" fill="#0e0e0e"/><path d="M58 52 66 80" stroke="#c9c9c9" stroke-width="5"/></svg></div>
    <div class="app"><svg viewBox="0 0 92 92"><g clip-path="url(#sq)"><rect width="92" height="92" fill="#fff"/><path d="M62 14 77 22V72L62 79Z" fill="#3f92e2"/><path d="M62 14V34L24 62 13 54Z" fill="#2a6fb8"/><path d="M13 36 24 30 62 58V79Z" fill="#3180cc"/></g></svg></div>
    <i class="dock-sep"></i>
    <div class="app run"><svg viewBox="0 0 92 92"><g clip-path="url(#sq)"><rect width="92" height="92" fill="#f5f5f3"/><circle cx="46" cy="46" r="40" fill="#de5145"/><path d="M46 46 18 18A40 40 0 0 0 46 86L66 46Z" fill="#57a45a"/><path d="M46 46 46 86A40 40 0 0 0 86 46V28L66 30Z" fill="#f3bb42"/><circle cx="46" cy="46" r="18" fill="#fff"/><circle cx="46" cy="46" r="14" fill="#4680e6"/></g></svg></div>
    <div class="app"><svg viewBox="0 0 92 92"><g clip-path="url(#sq)"><rect width="92" height="92" fill="#fff"/><rect x="24" y="14" width="55" height="22" fill="#55a2ea"/><rect x="24" y="36" width="55" height="22" fill="#3a7fd0"/><rect x="24" y="58" width="55" height="22" fill="#1f53ab"/><rect x="8" y="29" width="35" height="35" rx="3" fill="#1e56b6"/><text x="25.500" y="56" text-anchor="middle" class="word-w">W</text></g></svg></div>
    <div class="app"><svg viewBox="0 0 92 92"><g clip-path="url(#sq)"><rect width="92" height="92" fill="#f2f2f2"/><rect x="7" y="7" width="78" height="78" rx="8" fill="#9bbbe9"/><rect x="7" y="50" width="78" height="35" fill="#2d5d82"/><path d="M7 62Q30 52 48 68L60 85H7Z" fill="#c8d5dd"/></g><path d="M47 68H83L91 90Q66 102 41 90Z" fill="#c9ced2" stroke="#555"/><path d="M56 76 60 90 50 90ZM72 74 80 90 68 90Z" fill="#6f7478"/><rect x="45" y="45" width="40" height="26" rx="8" fill="#111"/></svg></div>
    <i class="dock-sep dock-sep2"></i>
    <div class="app app-trash"><svg viewBox="0 0 82 105"><path d="M1 14 8 94Q10 105 41 105 72 105 74 94L81 14Q41 26 1 14Z" fill="url(#g-trash)"/><path d="M4 16 14 6 22 14 30 0 40 12 50 2 60 14 72 4 78 16Q41 30 4 16Z" fill="#d8dadc"/><path d="M20 16 28 8 34 20ZM44 10 50 22 38 22ZM58 12 66 20 54 22Z" fill="#555"/></svg></div>
    <span class="badge">2</span>
  </div>
</div>
</body>
</html>
```
FILE: styles.css
```css
* { box-sizing: border-box; }
html, body { margin: 0; padding: 0; }
body {
  width: 2880px; height: 1800px; overflow: hidden;
  font-family: Inter, "Liberation Sans", sans-serif;
  display: flex; flex-direction: column;
  background:
    linear-gradient(#eceae3 0 120px, transparent 120px),
    radial-gradient(500px 120px at 2500px 1790px, #3c4a1c, transparent),
    radial-gradient(600px 100px at 1600px 1640px, #3a3a14, transparent),
    linear-gradient(90deg, #070a05, #161a0c 40%, #22280f 70%, #2d3a1a);
}
.defs { position: absolute; }
h1, h2, p, ul { margin: 0; padding: 0; font-weight: inherit; }
i { font-style: normal; display: block; }

/* macOS menu bar */
.menubar { height: 48px; display: flex; align-items: center; padding-left: 42px; background: linear-gradient(90deg, #f2f0e9, #e6e4dd); color: #111; font-size: 25px; flex: none; }
.apple { width: 26px; height: 30px; margin-top: -6px; }
.menu-items { display: flex; gap: 41.500px; margin-left: 40px; letter-spacing: .15px; }
.menu-app { font-weight: 700; letter-spacing: .6px; }
.status { margin-left: auto; display: flex; align-items: center; }
.st { flex: none; }
.st-vol { width: 38px; height: 36px; margin-right: 34px; }
.st-bat { width: 52px; height: 30px; margin-right: 37px; }
.st-wifi { width: 36px; height: 28px; margin-right: 37px; }
.st-search { width: 26px; height: 30px; margin-right: 41px; }
.st-ctl { width: 27px; height: 28px; margin-right: 36px; }
.st-siri { width: 29px; height: 30px; margin-right: 31px; }
.clock { width: 272px; white-space: nowrap; }

/* browser window */
.window { height: 1588px; flex: none; display: flex; flex-direction: column; border-radius: 20px 20px 24px 24px; overflow: hidden; border-top: 2px solid #2e2a28; }
.tabstrip { height: 80px; flex: none; background: #d9ab9b; display: flex; position: relative; }
.lights { width: 178px; display: flex; gap: 18px; padding: 29px 0 0 42px; }
.light { width: 22px; height: 22px; border-radius: 50%; }
.l-r { background: #f26a5e; } .l-y { background: #f4bf4f; } .l-g { background: #61c554; }
.tab { width: 476px; height: 32px; margin-top: 24px; display: flex; align-items: center; padding-left: 22px; border-right: 2px solid #f3e1da; flex: none; font-size: 23.600px; color: #2a2220; }
.tab-gh { padding-left: 18px; border-right: 0; }
.fav { width: 32px; height: 32px; flex: none; }
.tab-t { margin-left: 16px; width: 336px; overflow: hidden; white-space: nowrap; -webkit-mask-image: linear-gradient(90deg, #000 88%, transparent 100%); mask-image: linear-gradient(90deg, #000 88%, transparent 100%); }
.tab-t-plain { -webkit-mask-image: none; mask-image: none; }
.tab-x { margin-left: auto; width: 36px; margin-right: 20px; text-align: center; font-size: 34px; line-height: 32px; font-weight: 400; }
.tab-on { height: 68px; width: 462px; margin: 12px 0 0 7px; padding: 0 0 12px 21px; border: 0; background: #f3e1da; border-radius: 20px 20px 0 0; position: relative; }
.tab-on::before, .tab-on::after { content: ""; position: absolute; bottom: 0; width: 20px; height: 20px; }
.tab-on::before { left: -20px; background: radial-gradient(circle at 0 0, transparent 20px, #f3e1da 20.500px); }
.tab-on::after { right: -20px; background: radial-gradient(circle at 100% 0, transparent 20px, #f3e1da 20.500px); }
.fav-fig { width: 22px; height: 33px; }
.tab-on .tab-t { margin-left: 20px; width: 332px; }
.tab-on .tab-x { margin-right: 13px; }
.tab-plus { font-size: 42px; line-height: 72px; color: #222; margin-left: 28px; font-weight: 300; height: 80px; width: 30px; text-align: center; }
.tab-more { position: absolute; right: 12px; top: 12px; width: 56px; height: 56px; border-radius: 18px; background: #f3e1da; display: flex; align-items: center; justify-content: center; color: #222; }
.chev-more { width: 22px; height: 16px; }

.toolbar { height: 80px; flex: none; background: #f3e1da; display: flex; align-items: center; padding: 12px 0 0 32px; }
.nav-i { width: 24px; height: 24px; margin-right: 48px; flex: none; }
.nav-i:nth-of-type(3) { margin-right: 40px; }
.omnibox { width: 2292px; height: 68px; flex: none; border-radius: 34px; background: #d3c6c1; display: flex; align-items: center; padding-left: 9px; }
.site-btn { width: 48px; height: 48px; border-radius: 50%; background: #f3e1da; display: flex; align-items: center; justify-content: center; flex: none; }
.site-btn svg { width: 26px; height: 26px; }
.url { margin-left: 17px; font-size: 28px; color: #5a5452; white-space: nowrap; }
.url b { font-weight: 400; color: #1b1b1b; }
.star { width: 30px; height: 30px; margin-left: auto; margin-right: 33px; }
.tb-ext { width: 30px; height: 32px; margin-left: 38px; flex: none; }
.tb-sep { width: 3px; height: 32px; background: #dfa994; margin-left: 37px; flex: none; }
.tb-dl { width: 30px; height: 34px; margin-left: 38px; flex: none; }
.tb-avatar { width: 42px; height: 42px; border-radius: 50%; background: #8b6e62; color: #f3e1da; font-size: 20px; display: flex; align-items: center; justify-content: center; margin-left: 37px; flex: none; }
.tb-dots { display: flex; flex-direction: column; gap: 7px; margin-left: 47px; flex: none; }
.tb-dots i { width: 6px; height: 6px; background: #222; border-radius: 50%; }

.bookmarks { height: 80px; flex: none; background: #f3e1da; display: flex; align-items: center; font-size: 23.600px; color: #241e1c; border-bottom: 2px solid #cbbeb8; }
.bm-start { width: 130px; padding-left: 38px; display: flex; align-items: center; flex: none; }
.bm-apps { width: 28px; height: 28px; }
.bm-sep { width: 3px; height: 32px; background: #dfa994; }
.bm-start .bm-sep { margin-left: 32px; }
.bm-list { display: grid; grid-template-columns: 140px 174px 296px 308px 308px 309px 307px auto; flex: none; }
.bm { display: flex; align-items: center; gap: 13px; white-space: nowrap; }
.bmi { width: 30px; height: 30px; flex: none; }
.svg-mini { font: 700 12px "Liberation Sans", sans-serif; fill: #fff; }
.bm-end { margin-left: auto; display: flex; align-items: center; flex: none; }
.bm-more { font-size: 34px; width: 30px; text-align: center; margin-right: 31px; line-height: 30px; }
.bm-folder { width: 32px; height: 30px; margin: 0 16px 0 33px; }
.bm-all { width: 190px; white-space: nowrap; }

/* figma canvas */
.canvas { flex: 1; position: relative; background: linear-gradient(#f5f5f5 calc(100% - 40px), #dcdcdc 100%); overflow: hidden; }
.screens { display: flex; gap: 158.250px; padding: 157px 0 0 31px; }
.artboard { width: 431.250px; flex: none; }
.board-name { font-size: 22px; line-height: 28px; color: #b6b6b6; margin-bottom: 14px; font-weight: 400; }
.frame { height: 936px; background: #fff; display: flex; flex-direction: column; color: #111; overflow: hidden; }

.login, .register { padding: 0 16px; }
.brand { display: flex; align-items: flex-start; margin: 47px 0 0 4px; height: 104px; }
.brand-h { width: 65px; height: 104px; flex: none; }
.brand-t { font-size: 53px; font-weight: 600; color: #333; line-height: 60px; margin: 18px 0 0 6px; letter-spacing: 1.500px; }
.headline { font-size: 40px; line-height: 46px; font-weight: 600; color: #2e2e2e; white-space: nowrap; }
.login-title { margin-top: 58px; letter-spacing: -.5px; }
.subline { font-size: 18px; line-height: 24px; color: #777; }
.login-sub { letter-spacing: -.3px; }
.field { display: block; }
.f-label { font-size: 15px; line-height: 14px; color: #888; }
.f-label-sm { font-size: 12.500px; }
.input { height: 52px; border: 1.500px solid #cfcfcf; border-radius: 6px; display: flex; align-items: center; background: #fff; }
.slot { width: 36px; flex: none; margin-right: 15px; display: flex; justify-content: center; align-items: center; }
.ic-env { width: 28px; height: 20px; }
.ic-user { width: 24px; height: 30px; }
.ic-lock { width: 22px; height: 34px; }
.ic-eye { width: 22px; height: 24px; margin: 0 11px 0 auto; flex: none; }
.ic-flag { width: 26px; height: 22px; }
.val { font-size: 17.500px; font-weight: 500; color: #0b0b0b; letter-spacing: .1px; white-space: nowrap; }
.val-strong { font-size: 17px; font-weight: 600; letter-spacing: .1px; }
.val-pw { font-size: 16.500px; letter-spacing: .1px; margin-top: -1px; }
.login-f1 { margin-top: 54px; }
.login-f2 { margin-top: 37px; }
.forgot { font-size: 13.500px; line-height: 18px; font-style: italic; color: #777; text-decoration: underline; text-align: right; margin: 21px 5px 0 0; }
.cta { width: 325px; height: 72px; border-radius: 36px; background: #1f3db4; color: #fff; font-size: 20px; font-weight: 600; display: flex; align-items: center; justify-content: center; align-self: center; flex: none; }
.login-cta { margin-top: 79px; }
.foot { margin-top: auto; margin-bottom: 17px; font-size: 17.300px; line-height: 24px; color: #777; text-align: center; white-space: nowrap; }
.foot-link { color: #1f3db4; font-weight: 600; text-decoration: underline; margin-left: 10px; font-size: 16.300px; }

.reg-top { display: grid; grid-template-columns: 1fr 20px 1fr; margin: 16px 0 0; height: 30px; }
.reg-back { width: 20px; height: 18px; margin-left: 2px; color: #111; }
.reg-logo { width: 20px; height: 30px; grid-column: 2; }
.reg-title { margin-top: 29px; letter-spacing: .9px; }
.reg-sub { margin-top: -1px; }
.reg-f1 { margin-top: 44px; }
.reg-f { margin-top: 37px; }
.age { font-size: 14px; font-weight: 600; color: #808080; line-height: 20px; }
.reg-age { margin: 38px 0 0 1px; }
.slider { height: 26px; position: relative; width: 375px; flex: none; }
.slider::before { content: ""; position: absolute; left: 0; right: 0; top: 10px; height: 6px; background: #777; }
.thumb { position: absolute; left: 25.300%; top: 0; width: 25px; height: 25px; margin-left: -12.500px; border-radius: 50%; background: #1f3db4; }
.reg-slider { margin: 3px 0 0 14px; }
.reg-country { margin-top: 38px; }
.caret { width: 0; height: 0; border-left: 5px solid transparent; border-right: 5px solid transparent; border-top: 8px solid #666; margin: 0 6px 0 auto; }
.habits-title { font-size: 14px; font-weight: 600; color: #777; line-height: 18px; margin: 40px 0 0 2px; }
.chips { display: flex; gap: 12px; margin-top: 8px; }
.chip { width: 121px; height: 32px; border-radius: 16px; background: #d9d9d9; color: #efefef; font-size: 11.500px; display: flex; align-items: center; justify-content: center; white-space: nowrap; }
.reg-cta { margin-top: 84px; }

.bar { height: 51px; flex: none; background: #1f3db4; color: #fff; position: relative; display: flex; align-items: center; justify-content: center; }
.bar-title { font-size: 25px; font-weight: 600; line-height: 51px; }
.bar-title-sm { font-size: 24px; }
.burger { position: absolute; left: 17px; top: 17px; width: 21px; height: 18px; }
.bar-back { position: absolute; left: 18px; top: 16px; width: 20px; height: 18px; color: #fff; }
.home-body { flex: 1; display: flex; flex-direction: column; border: 16px solid #d9d9d9; border-width: 0 16px 17px; min-height: 0; }
.home-todo { height: 416px; flex: none; border-bottom: 2px solid #d9d9d9; }
.home-done { flex: 1; display: flex; flex-direction: column; }
.sec-head { height: 24px; margin-top: 21px; display: flex; align-items: center; justify-content: center; gap: 12px; font-size: 15px; font-weight: 600; color: #111; }
.sec-done { margin-top: 11px; font-size: 16px; gap: 13px; }
.ic-note { width: 22px; height: 22px; margin-top: -4px; }
.ic-check, .ic-party { width: 24px; height: 24px; }
.habit { height: 59px; margin: 0 19px 0 17px; border-radius: 6px; color: #fff; font-size: 16px; font-weight: 600; line-height: 24px; padding: 12px 0 0 21px; position: relative; flex: none; }
.h-purple { background: #6b25cc; margin-top: 37px; }
.h-green { background: #43874b; margin-top: 13px; }
.h-pink { background: #b52b63; margin-top: 38px; }
.done-mark { position: absolute; right: 13px; top: 14px; width: 30px; height: 30px; }
.fab { width: 58px; height: 58px; border-radius: 5px; background: #1f3db4; margin: auto 19px 19px auto; display: flex; align-items: center; justify-content: center; }
.fab svg { width: 27px; height: 27px; }

.drawer { width: 318px; height: 100%; background: #eeeeee; border-radius: 0 28px 28px 0; overflow: hidden; display: flex; flex-direction: column; }
.drawer-head { height: 233px; flex: none; background: #1f3db4; color: #fff; font-size: 26px; font-weight: 600; padding: 16px 0 0 17px; line-height: 36px; }
.drawer-list { list-style: none; padding: 21px 0 0 13px; }
.drawer-list li { height: 52.500px; display: flex; align-items: center; gap: 20px; font-size: 17px; color: #111; }
.d-ic { width: 24px; height: 24px; flex: none; }

.profile-body { padding: 0 15.500px; display: flex; flex-direction: column; flex: 1; }
.pf-f1 { margin-top: 60px; }
.pf-f { margin-top: 60px; }
.pf-age { margin-top: 60px; font-size: 18px; text-align: center; line-height: 22px; padding-right: 32px; }
.pf-slider { margin: 12px 0 0 15px; }
.pf-cta { margin-top: 71px; }

/* floating figma chrome */
.float-left, .float-right { position: absolute; top: 26px; height: 96px; background: #2c2c2c; border-radius: 24px; display: flex; align-items: center; color: #fff; box-shadow: 0 3px 10px rgba(0,0,0,.25); }
.float-left { left: 24px; width: 683px; padding-left: 36px; }
.fig-mark { width: 24px; height: 36px; flex: none; }
.fl-chev { width: 14px; height: 10px; color: #fff; flex: none; }
.float-left .fl-chev { margin-left: 13px; }
.file-name { font-size: 26px; font-weight: 600; margin-left: 44px; white-space: nowrap; letter-spacing: -.3px; }
.free { margin-left: 20px; width: 61px; height: 32px; border-radius: 7px; background: #3a4664; color: #7cc0f5; font-size: 23px; display: flex; align-items: center; justify-content: center; flex: none; }
.side-i { width: 34px; height: 26px; margin-left: 25px; flex: none; }
.float-right { left: 2353px; width: 503px; padding-left: 24px; }
.fr-avatar { width: 48px; height: 48px; border-radius: 50%; background: #51ab69; font-size: 24px; display: flex; align-items: center; justify-content: center; flex: none; }
.fr-c1 { margin-left: 11px; }
.zoombox { width: 132px; height: 51px; border: 2px solid #444; border-radius: 12px; margin-left: 25px; flex: none; display: flex; align-items: center; padding-left: 24px; font-size: 24px; font-weight: 500; position: relative; }
.zb-c { margin-left: auto; margin-right: 14px; }
.play { width: 26px; height: 30px; margin-left: 38px; flex: none; }
.fr-c2 { margin-left: 29px; }
.share { width: 109px; height: 64px; border-radius: 12px; background: #3a89e0; font-size: 23px; font-weight: 500; display: flex; align-items: center; justify-content: center; margin-left: 18px; flex: none; }

.tools { position: absolute; left: 1019px; top: 1228px; width: 842px; height: 96px; border-radius: 28px; background: #2c2c2c; display: flex; align-items: center; padding-left: 16px; box-shadow: 0 3px 12px rgba(0,0,0,.3); }
.t-active, .t-slot { width: 64px; height: 64px; border-radius: 12px; display: flex; align-items: center; justify-content: center; flex: none; }
.t-active { background: #3a89e0; }
.t-ic { width: 34px; height: 34px; }
.t-chev { width: 14px; height: 10px; color: #fff; margin: 0 25px 0 11px; flex: none; }
.t-next { margin-left: 16px; }
.t-div { width: 2px; align-self: stretch; background: #444; margin: 0 25px 0 17px; flex: none; }
.code-toggle { width: 79px; height: 48px; border-radius: 12px; background: #383838; flex: none; }
.code-knob { width: 44px; height: 48px; border-radius: 12px; background: #2c2c2c; border: 1.500px solid #444; display: flex; align-items: center; justify-content: center; }
.code-ic { width: 32px; height: 26px; }
.help { position: absolute; left: 2768px; top: 1239px; width: 64px; height: 64px; border-radius: 50%; background: #1e1e1e; color: #fff; font-size: 32px; font-weight: 300; display: flex; align-items: center; justify-content: center; }
.scroll-thumb { position: absolute; left: 8px; top: 1330px; width: 1784px; height: 8px; border-radius: 4px; background: #959595; }

/* dock */
.dock-zone { height: 164px; flex: none; padding: 10px 0 0 105px; }
.dock { width: 2668px; height: 143px; border-radius: 40px; border: 2px solid #56564a; background: linear-gradient(90deg, #1b1c12, #22221a 45%, #2e2a18); display: flex; align-items: flex-start; padding: 19px 0 0 18px; gap: 30.600px; position: relative; }
.app { width: 91px; height: 92px; flex: none; position: relative; }
.app svg { width: 100%; height: 100%; display: block; overflow: visible; }
.app.run::after { content: ""; position: absolute; left: 43px; top: 112px; width: 6px; height: 8px; border-radius: 50%; background: #b5b5a5; }
.dock-sep { width: 2px; height: 108px; margin: -3px 11px 0 11px; background: #6a6a58; flex: none; }
.dock-sep2 { margin-right: 14px; }
.app-trash { width: 82px; height: 105px; margin-top: -2px; }
.badge { position: absolute; left: 1784px; top: 9px; width: 40px; height: 42px; border-radius: 50%; background: #e34f3e; color: #fff; font-size: 24px; display: flex; align-items: center; justify-content: center; }
.cal-m { font: 600 20px Inter, sans-serif; fill: #fff; }
.cal-d { font: 300 58px Inter, sans-serif; fill: #222; }
.word-w { font: 700 26px "Liberation Sans", sans-serif; fill: #fff; }
```
